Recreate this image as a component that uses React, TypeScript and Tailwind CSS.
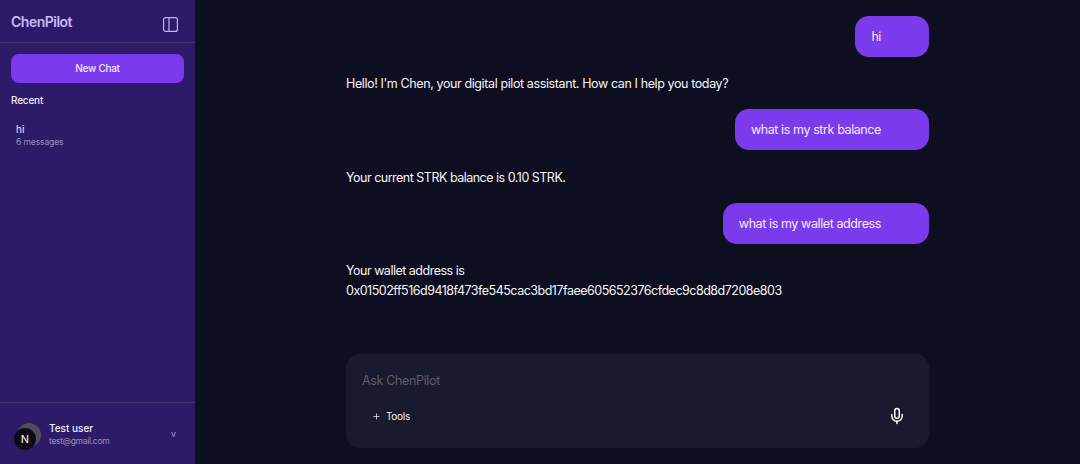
import { Mic, Plus } from "lucide-react";

const font = "font-['Inter','Noto_Sans',sans-serif]";

function UserBubble({ text }: { text: string }) {
  return (
    <div className="flex justify-end">
      <div className="h-[41px] rounded-[14px] bg-[#7c3aed] pl-4 pr-12 text-[12.5px] leading-[41px] tracking-[-0.4px] text-[#f3ecff]">
        {text}
      </div>
    </div>
  );
}

function BotText({ children }: { children: React.ReactNode }) {
  return <div className="text-[12.5px] leading-5 tracking-[-0.5px] text-[#f5f5f7]">{children}</div>;
}

export default function App() {
  return (
    <div className={`flex h-[464px] w-[1080px] overflow-hidden bg-[#0d0e20] ${font}`}>
      <aside className="flex w-[195px] shrink-0 flex-col bg-[#2d1b69]">
        <div className="flex h-[43px] items-center justify-between border-b border-[#41316f] pl-[11px] pr-[17px]">
          <span className="text-[14px] font-semibold tracking-[-0.5px] text-[#c9b8f8]">ChenPilot</span>
          <svg className="mt-[6px] h-[15px] w-[15px] text-[#c4b0f5]" viewBox="0 0 15 15" fill="none" stroke="currentColor" strokeWidth="1.2">
            <rect x="0.6" y="0.6" width="13.8" height="13.8" rx="2" />
            <path d="M6 0.6V14.4" />
          </svg>
        </div>
        <div className="flex-1 px-[11px] pt-[11px]">
          <button className="h-[29px] w-full rounded-lg bg-[#7c3aed] text-[10px] font-medium tracking-[-0.3px] text-[#efe7ff]">
            New Chat
          </button>
          <div className="mt-[10px] text-[10px] font-medium leading-[14px] tracking-[-0.2px] text-[#f0edf8]">Recent</div>
          <div className="mt-[16px] pl-[5px]">
            <div className="text-[10px] leading-[12px] text-[#f0edf8]">hi</div>
            <div className="mt-px text-[8.5px] leading-[13px] tracking-[-0.1px] text-[#9a90b8]">6 messages</div>
          </div>
        </div>
        <div className="flex h-[62px] items-center border-t border-[#41316f] pl-[14px] pr-[19px]">
          <div className="relative mt-[11px] h-[22px] w-[22px] shrink-0">
            <div className="absolute -top-[5px] left-[3px] h-6 w-6 rounded-full bg-[#4f4d5a]" />
            <div className="absolute inset-0 flex items-center justify-center rounded-full bg-[#0c0a14] text-[11px] text-white">
              N
            </div>
          </div>
          <div className="ml-[13px] mt-[2px] flex-1">
            <div className="text-[10px] font-medium leading-[13px] text-[#f0edf8]">Test user</div>
            <div className="text-[8.5px] leading-[13px] tracking-[-0.3px] text-[#9a90b8]">test@gmail.com</div>
          </div>
          <span className="text-[9px] text-[#a79cc6]">v</span>
        </div>
      </aside>

      <main className="flex flex-1 flex-col pl-[151px] pr-[151px]">
        <div className="flex flex-1 flex-col pt-4">
          <UserBubble text="hi" />
          <div className="mt-[17px] text-[12.5px] leading-5 tracking-[-0.39px] text-[#f5f5f7]">
            Hello! I'm Chen, your digital pilot assistant. How can I help you today?
          </div>
          <div className="mt-[15px]">
            <UserBubble text="what is my strk balance" />
          </div>
          <div className="mt-[18px]">
            <BotText>Your current STRK balance is 0.10 STRK.</BotText>
          </div>
          <div className="mt-[15px]">
            <UserBubble text="what is my wallet address" />
          </div>
          <div className="mt-[17px]">
            <BotText>
              Your wallet address is
              <br />
              0x01502ff516d9418f473fe545cac3bd17faee605652376cfdec9c8d8d7208e803
            </BotText>
          </div>
        </div>
        <div className="mb-4 flex h-[94px] flex-col rounded-[14px] bg-[#1a1a2e] px-4 pt-4">
          <div className="mt-px text-[12.5px] leading-5 tracking-[-0.35px] text-[#5d5d6e]">Ask ChenPilot</div>
          <div className="mt-[16px] flex h-[18px] items-center justify-between pr-[7px]">
            <div className="flex items-center gap-[5px] pl-[10px] text-[10px] tracking-[-0.3px] text-[#f0f0f4]">
              <Plus className="h-[9px] w-[9px]" strokeWidth={2} />
              Tools
            </div>
            <Mic className="h-[18px] w-[18px] text-white" strokeWidth={2} />
          </div>
        </div>
      </main>
    </div>
  );
}
